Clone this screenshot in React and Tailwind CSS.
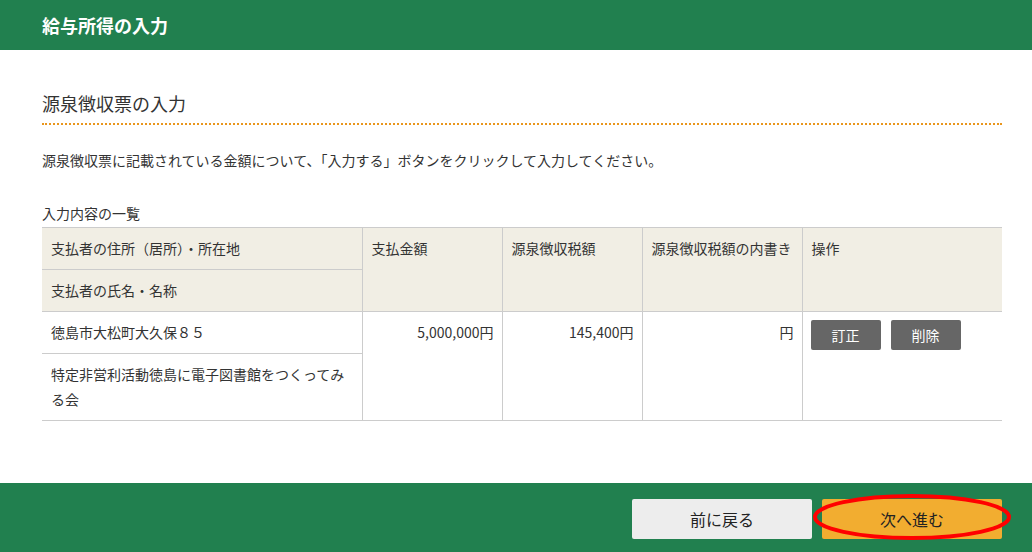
import React from 'react';

const font = { fontFamily: '"Noto Sans CJK JP", "Noto Sans", sans-serif' };

function HeadCell({ children, rowSpan, last }) {
  return (
    <th
      rowSpan={rowSpan}
      className={`align-top text-left font-normal px-[9px] py-[8px] leading-[25px] bg-[#f1eee4] border-b border-[#cccccc] ${last ? '' : 'border-r'}`}
    >
      {children}
    </th>
  );
}

export default function App() {
  return (
    <div className="w-[1032px] h-[552px] flex flex-col bg-white text-[#333333] overflow-hidden" style={font}>
      <header className="h-[50px] shrink-0 bg-[#21804f] flex items-center px-[42px]">
        <h1 className="text-white font-bold text-[18px] leading-none">給与所得の入力</h1>
      </header>

      <main className="flex-1 pl-[42px] pr-[30px] pt-[38px]">
        <h2 className="text-[18px] leading-[30px] pb-[5px] border-b-2 border-dotted border-[#e9961d]">
          源泉徴収票の入力
        </h2>
        <p className="mt-[25px] text-[14px] leading-[20px]">
          源泉徴収票に記載されている金額について、「入力する」ボタンをクリックして入力してください。
        </p>
        <p className="mt-[33px] mb-[4px] text-[14px] leading-[20px]">入力内容の一覧</p>

        <table className="w-[960px] border-collapse border-t border-[#cccccc] text-[14px] table-fixed">
          <colgroup>
            <col className="w-[320px]" />
            <col className="w-[140px]" />
            <col className="w-[140px]" />
            <col className="w-[160px]" />
            <col className="w-[200px]" />
          </colgroup>
          <thead>
            <tr>
              <HeadCell>支払者の住所（居所）・所在地</HeadCell>
              <HeadCell rowSpan={2}>支払金額</HeadCell>
              <HeadCell rowSpan={2}>源泉徴収税額</HeadCell>
              <HeadCell rowSpan={2}>源泉徴収税額の内書き</HeadCell>
              <HeadCell rowSpan={2} last>操作</HeadCell>
            </tr>
            <tr>
              <HeadCell>支払者の氏名・名称</HeadCell>
            </tr>
          </thead>
          <tbody>
            <tr>
              <td className="align-top px-[9px] py-[8px] leading-[25px] border-b border-r border-[#cccccc]">
                徳島市大松町大久保８５
              </td>
              <td rowSpan={2} className="align-top text-right px-[8px] py-[8px] leading-[25px] border-b border-r border-[#cccccc]">
                5,000,000円
              </td>
              <td rowSpan={2} className="align-top text-right px-[8px] py-[8px] leading-[25px] border-b border-r border-[#cccccc]">
                145,400円
              </td>
              <td rowSpan={2} className="align-top text-right px-[8px] py-[8px] leading-[25px] border-b border-r border-[#cccccc]">
                円
              </td>
              <td rowSpan={2} className="align-top px-[8px] pt-[8px] border-b border-[#cccccc]">
                <div className="flex gap-[10px]">
                  <button className="w-[70px] h-[30px] rounded-[2px] bg-[#666666] text-white text-[14px]">訂正</button>
                  <button className="w-[70px] h-[30px] rounded-[2px] bg-[#666666] text-white text-[14px]">削除</button>
                </div>
              </td>
            </tr>
            <tr>
              <td className="align-top px-[9px] py-[8px] leading-[25px] border-b border-r border-[#cccccc]">
                特定非営利活動徳島に電子図書館をつくってみる会
              </td>
            </tr>
          </tbody>
        </table>
      </main>

      <footer className="h-[69px] shrink-0 bg-[#21804f] flex items-start justify-end gap-[10px] pt-[16px] pr-[30px]">
        <button className="w-[180px] h-[40px] rounded-[2px] bg-[#ededed] text-[#222222] text-[16px]">前に戻る</button>
        <div className="relative">
          <button className="w-[180px] h-[40px] rounded-[2px] bg-[#f2ad30] text-[#222222] text-[16px]">次へ進む</button>
          <svg className="absolute left-[-10px] top-[-6px] pointer-events-none" width="200" height="48" viewBox="0 0 200 48">
            <ellipse cx="100" cy="24" rx="97" ry="21" fill="none" stroke="#ff0000" strokeWidth="4" />
          </svg>
        </div>
      </footer>
    </div>
  );
}
